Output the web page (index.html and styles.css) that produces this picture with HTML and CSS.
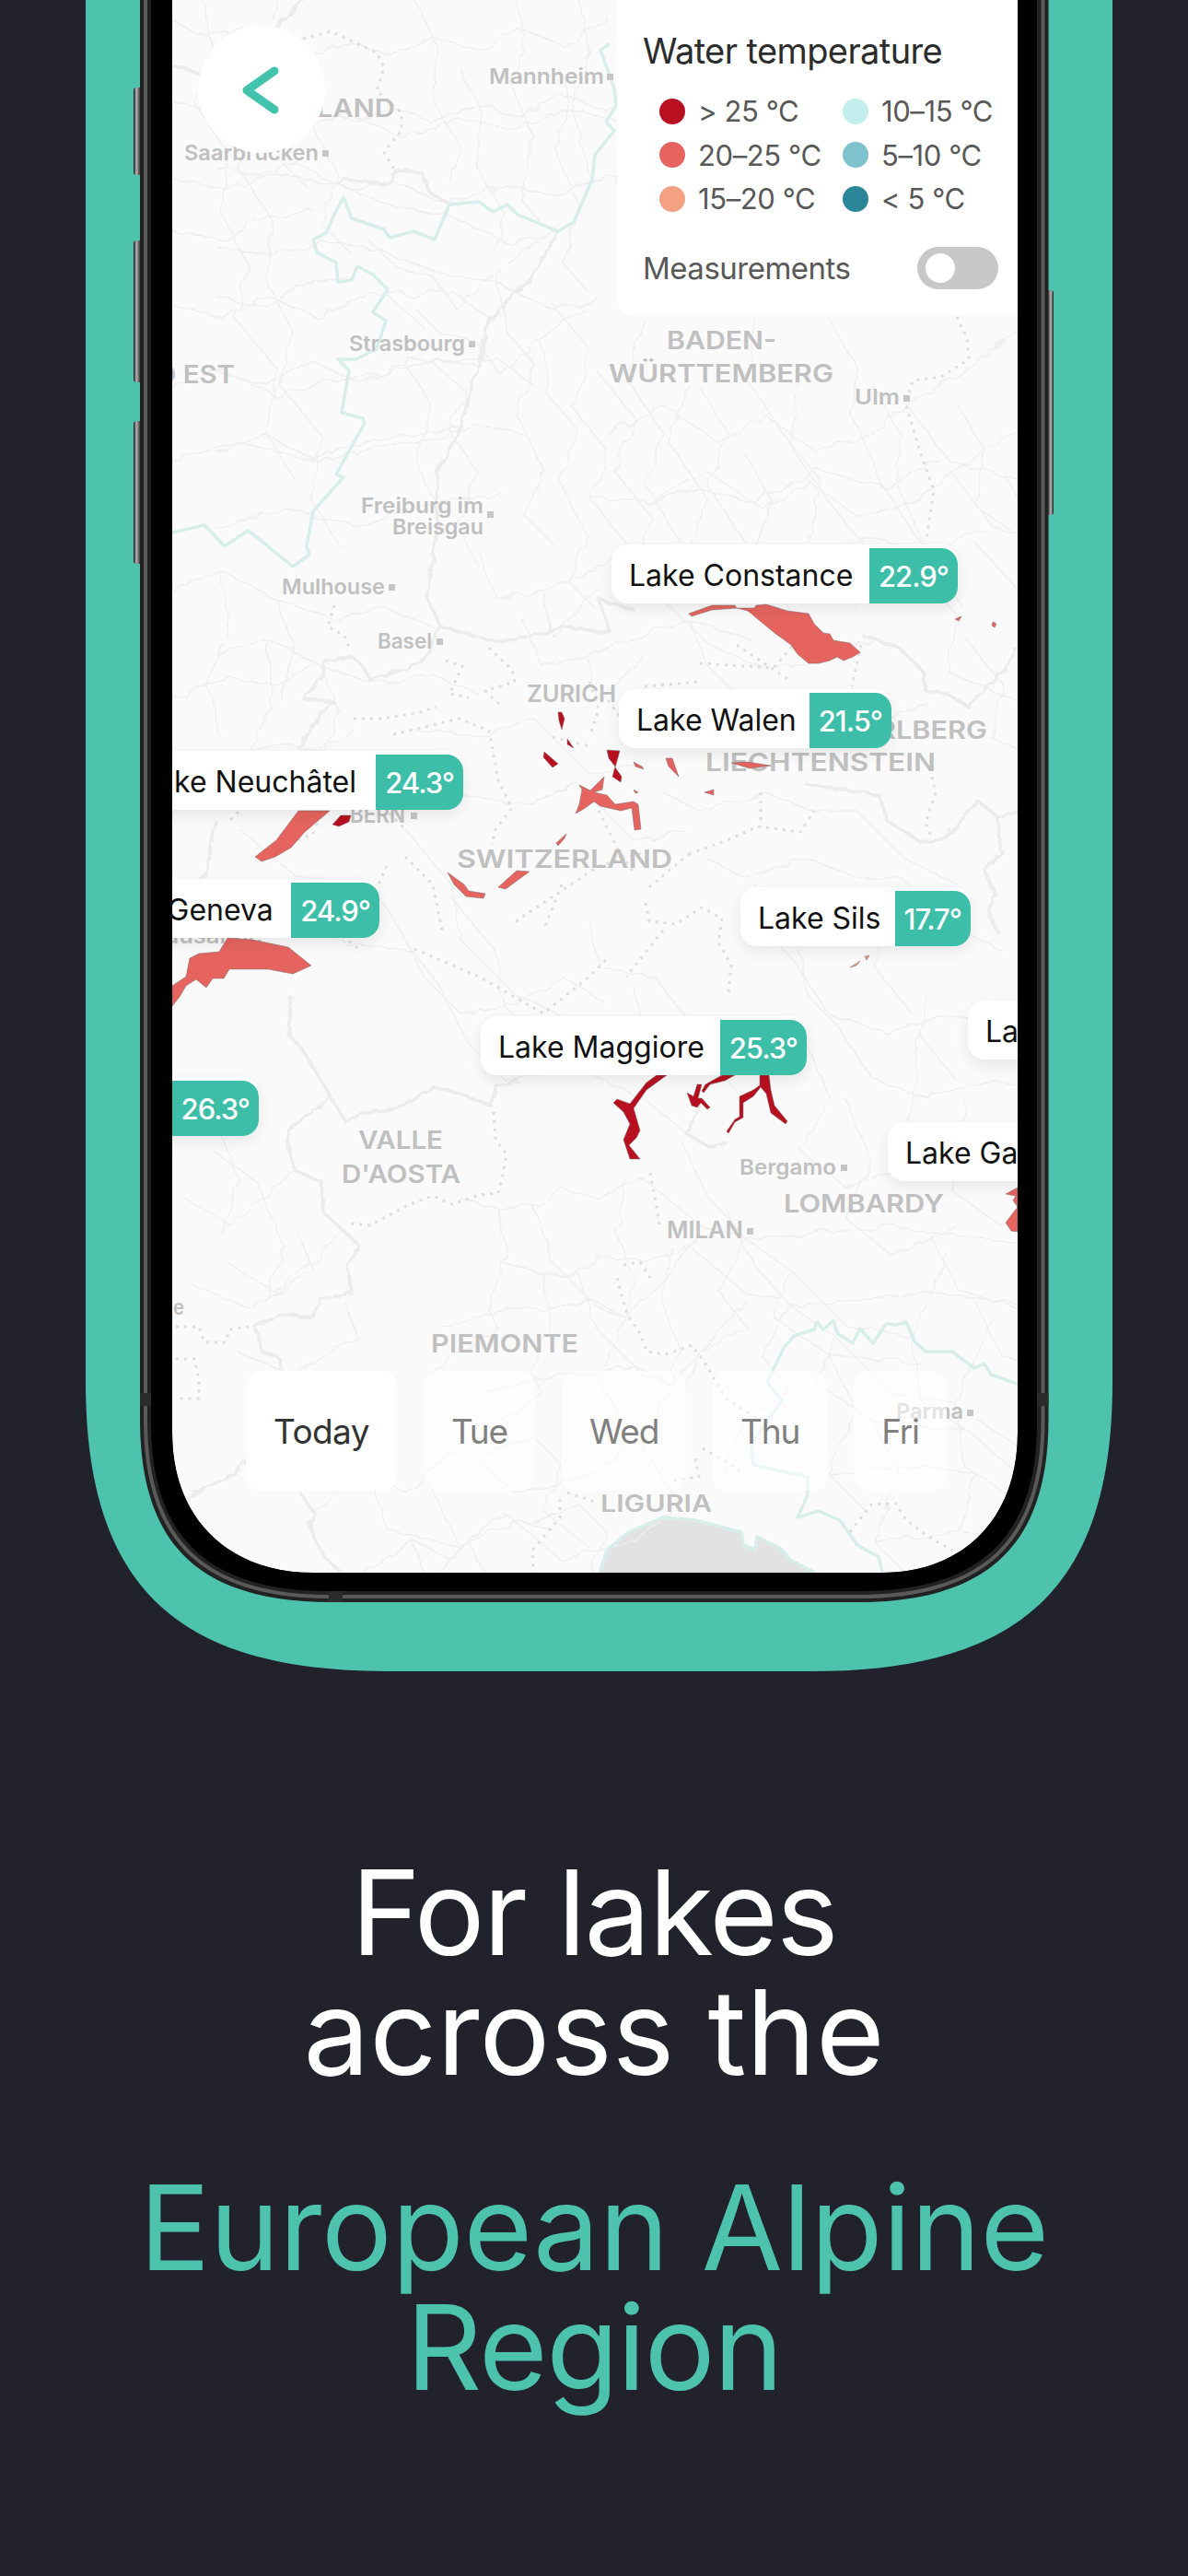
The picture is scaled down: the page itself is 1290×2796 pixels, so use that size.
FILE: index.html
```html
<!DOCTYPE html>
<html lang="en">
<head>
<meta charset="utf-8">
<title>Lake temperatures</title>
<link rel="stylesheet" href="styles.css">
</head>
<body>
<section class="stage">
  <svg class="panel" viewBox="0 0 1290 1814" aria-hidden="true"><path d="M93,0 V1500 C93,1725 195,1814 420,1814 H880 C1106,1814 1208,1725 1208,1500 V0 Z"/></svg>
  <div class="screen">
    <svg class="map" viewBox="187 0 918 1707">
      <defs>
        <filter id="wobble" filterUnits="userSpaceOnUse" x="187" y="0" width="918" height="1707"><feTurbulence type="fractalNoise" baseFrequency=".05" numOctaves="2" seed="4"/><feDisplacementMap in="SourceGraphic" scale="12"/></filter>
        <filter id="wobble-soft" filterUnits="userSpaceOnUse" x="187" y="0" width="918" height="1707"><feTurbulence type="fractalNoise" baseFrequency=".09" numOctaves="2" seed="9"/><feDisplacementMap in="SourceGraphic" scale="7"/></filter>
      </defs>
      <path class="sea" d="M651,1707 L659,1683 L682,1663 L720,1647 L755,1650 L805,1663 L807,1677 L820,1682 L822,1668 L847,1680 L858,1693 L885,1707 Z"/>
      <g class="roads-wrap">
      <g id="roads" class="roads">
        <path d="M187,22 L225,40 L262,30 L300,52 L345,60 L380,45 L420,60 L470,42 L520,55 L560,30 L610,48 L660,20 M187,110 L235,120 L275,105 L330,135 L380,125 L440,150 L500,128 L560,140 L610,118 L668,130 M187,195 L240,205 L300,190 L365,200 L430,225 L490,235 L555,265 L606,252 M220,0 L232,55 L210,110 L250,170 L240,230 L270,290 L255,345 L300,400 L290,470 L320,520 M300,0 L290,60 L320,120 L300,170 L335,205 M450,0 L475,50 L470,110 L500,160 L490,200 M560,0 L570,40 L555,90 L580,150 L565,215 L590,245 M630,0 L640,60 L622,120 L640,190"/>
        <path d="M187,250 L245,262 L275,238 L340,228 M187,330 L240,345 L290,320 L345,345 L400,318 L450,320 L490,315 L530,345 M187,420 L240,400 L300,430 L355,415 L420,405 L470,390 L520,398 M187,500 L260,480 L340,500 L395,480 L450,470 L500,463 M400,260 L430,290 L470,300 L495,335 L540,295 L585,262 M420,320 L460,355 L440,395 L470,440 L450,500 L470,540 M540,300 L550,360 L580,395 L560,450 L590,510 L570,560 L600,590 M600,330 L640,380 L620,440 L660,490 L640,540 L680,590 M700,345 L680,410 L720,470 L700,525 L740,590 M760,420 L790,470 L770,530 L810,590 M820,345 L810,410 L850,470 L890,520 L880,590 M660,470 L720,440 L780,480 L830,450 L885,490 L950,470 L985,440 M640,540 L700,545 L760,530 L820,545 L890,510 L960,530 L1020,500 M900,345 L930,400 L925,450 L960,530 L1000,590 M1105,360 L1050,400 L985,440 L1030,500 L1105,520 M1040,440 L1070,490 L1060,550 L1105,580"/>
        <path d="M187,640 L240,620 L300,650 L360,670 L420,660 L470,680 M240,620 L250,680 L225,740 L240,800 M300,650 L320,700 L305,760 M187,760 L250,735 L300,745 L340,720 M520,600 L540,650 L590,640 L640,620 L700,600 L770,625 M590,640 L600,690 L650,640 M700,600 L720,650 L770,700 L830,725 L890,720 L960,690 M1000,620 L1040,670 L1030,730 L1105,760 M1060,590 L1105,640 M450,790 L520,800 L580,780 L640,840 L700,830 M440,900 L490,960 L500,1020 L560,1080 L650,1120 L700,1160 M260,900 L320,950 L400,960 L430,1000 L460,1060 L500,1100 L560,1090 L610,1060 L660,1090 M720,860 L760,880 L830,860 L880,880 L930,880 L980,930 L1040,960 M820,960 L830,1010 L860,1040 L900,1100 L960,1120 L1030,1100 L1105,1120 M640,1000 L650,1050 L710,1060 L750,1110 M960,1010 L950,1050 L990,1100 M187,1180 L230,1210 L260,1280 L240,1340 M200,1300 L250,1330 L300,1290 L320,1270 M210,1395 L270,1420 L340,1380 L325,1340"/>
        <path d="M500,1300 L540,1310 L580,1310 L610,1290 L650,1300 L700,1280 L760,1330 L800,1340 M540,1310 L550,1360 L530,1420 L540,1440 L500,1470 L470,1490 M580,1310 L600,1370 L650,1420 L680,1430 L720,1390 L760,1340 M680,1430 L640,1410 L600,1420 L555,1420 L480,1440 M680,1280 L670,1340 L690,1390 L680,1430 L650,1500 L690,1560 L640,1600 M740,1240 L770,1300 L810,1345 L860,1380 L920,1440 L990,1450 L1030,1360 M810,1345 L780,1400 L810,1440 L760,1470 L735,1530 M810,1345 L870,1340 L960,1330 L1030,1340 L1105,1350 M860,1380 L840,1430 L900,1470 L1000,1480 M1000,1120 L985,1220 L1040,1260 L1105,1240 M870,1120 L900,1190 L870,1250 L920,1290 L990,1260 M1010,1340 L1040,1400 L1105,1420 M990,1450 L1000,1520 L1060,1560 L1105,1600 M900,1470 L930,1530 L900,1600 L940,1640 M1060,1540 L1105,1570 M640,1600 L560,1620 L500,1570 L460,1600 L500,1680 L480,1707 M530,1580 L580,1560 L610,1590 L590,1640 L640,1680 M500,1680 L560,1650 L600,1660 M900,1600 L1000,1590 L1060,1600 L1040,1660 M340,1640 L400,1600 L440,1620 L500,1570 M400,1600 L420,1660 L500,1680"/>
      </g>
      <use href="#roads" transform="translate(48,72)"/>
      </g>
      <g class="borders">
        <path d="M363,199 L375,193 L421,201 L432,184 L459,188 L467,209 L488,222 M187,70 L230,85 L262,60 L300,30 L330,0 M606,252 L574,306 L558,318 L528,352 L520,398 L509,429 L501,463 L474,513 L474,536 L475,580 L463,647 L477,677 L463,713 L441,727 L402,737 L391,720 L381,712 L352,717 L349,737 L327,757 L363,763 L345,780 L324,813 M234,890 L224,950 L190,980"/>
        <path d="M477,680 L541,697 L591,687 L609,680 L663,687 L650,650 L691,663 M937,690 L976,703 L994,720 L1003,730 L1005,750 L1028,753 L1051,767 L1087,730 L1105,705 M873,850 L955,863 L962,890 L1001,915 L1026,910 L1062,870 L1084,887 L1105,880 M1084,887 L1087,927 L1069,943 L1080,970 L1073,990 L1084,1013 M316,1080 L313,1123 L327,1137 L359,1190 L374,1217 L399,1207 L431,1203 L470,1180 L499,1187 L534,1200 L538,1180 L563,1173 M359,1190 L313,1227 L313,1247 L320,1270 L349,1283 L352,1317 L370,1333 L391,1353 L377,1373 L381,1403 L349,1410 L338,1430 L302,1427 L277,1440 L284,1467 L302,1473 L306,1487 M325,1620 L342,1643 L335,1655 L352,1690 L371,1707 M202,1627 L218,1617 L256,1600 L268,1583 M760,1200 L745,1230 L770,1245 L790,1240"/>
      </g>
      <g class="cantons">
        <path d="M329,42 L359,34 L409,57 L417,73 L409,99 L436,122 L436,142 L417,165 L428,184 M1039,344 L1050,367 L1052,390 L1022,409 L991,413 L984,440 L999,490 L1014,532 L1006,585 M363,657 L356,680 L374,690 L381,707 M484,717 L502,723 L488,753 L509,757 M531,703 L556,727 L559,740 L527,750 L545,767 M384,780 L416,780 L456,773 L474,767 M427,797 L499,780 L531,793 L541,847 L556,877 L538,900 L534,917 M748,927 L787,913 L823,897 L869,903 L884,880 M826,860 L826,897 M705,963 L748,927 M701,980 L705,1000 L734,1003 L762,985 L784,997 L780,1023 L794,1047 L791,1077 M1012,843 L1016,860 L1005,893 L1012,910 M536,1207 L538,1237 L550,1253 L545,1280 L541,1295 L520,1297 L491,1307 L470,1298 L445,1307 L402,1330 L381,1328 M706,1273 L713,1310 L716,1330 M677,1373 L695,1370 L706,1387 M670,1387 L677,1413 L681,1427 L695,1447 L702,1467 L723,1470 L751,1460 L766,1480 L787,1517 L823,1540 M191,1440 L216,1440 L222,1457 L245,1457 L249,1443 L270,1440 M191,1475 L211,1475 L216,1497 L216,1518 L191,1518 M763,1572 L789,1587 L808,1600 M755,1583 L759,1603 L732,1607 M923,1663 L946,1633 L973,1632 L984,1650 L1007,1667 L1034,1683 M608,1627 L608,1647 L578,1683 L579,1707 M616,1620 L646,1630"/>
        <path d="M330,850 L280,860 L250,890 M290,925 L340,905 L350,880 M330,960 L350,1000 L390,1030 M410,870 L440,900 M420,940 L400,985 M440,930 L470,960 L480,1010 M450,1030 L520,1060 L590,1100 L640,1060 L660,1040 M560,1000 L620,960 L650,940 L700,925 M610,960 L590,1010 M660,760 L690,800 M640,740 L650,770 L640,800 M600,800 L640,810 M650,880 L670,920 L690,950 M720,1010 L680,1060 M800,700 L860,740 M760,720 L840,725 L870,690 M700,745 L760,740 M935,700 L925,745"/>
      </g>
      <g class="frontier">
        <path d="M662,48 L652,54 L667,96 L669,115 L658,132 L667,142 L646,168 L643,195 L623,241 L606,251 L562,233 L551,222 L535,230 L520,219 L488,222 L472,260 L449,251 L423,258 L417,249 L382,237 L373,214 L363,233 L354,253 L340,260 L344,274 L365,285 L367,306 L382,304 L388,289 L405,298 L421,314 L405,339 L419,348 L409,379 L386,390 L367,390 L379,402 L371,448 L394,454 L396,459 L365,515 L373,518 L340,555 L333,593 L336,602 L318,615 L275,580 L269,576 L244,593 L222,570 L187,578"/>
        <path d="M1105,1502 L1076,1492 L1069,1480 L1058,1485 L1034,1467 L1005,1467 L994,1457 L984,1435 L973,1438 L962,1437 L948,1458 L934,1442 L926,1458 L909,1447 L905,1433 L894,1443 L887,1435 L884,1443 L862,1450 L851,1463 L833,1500 L849,1520 L816,1567 L818,1590 L877,1603 L877,1623 L866,1647 L889,1640 L912,1650 L931,1677 L954,1690 L958,1707"/>
        <path d="M651,1707 L659,1683 L682,1663 L720,1647 L755,1650 L805,1663 L807,1677 L820,1682 L822,1668 L847,1680 L858,1693 L885,1707"/>
      </g>
      <g class="markers">
        <rect x="659" y="80" width="7" height="7"/><rect x="350" y="163" width="7" height="7"/><rect x="509" y="370" width="7" height="7"/><rect x="529" y="555" width="7" height="7"/><rect x="981" y="429" width="7" height="7"/><rect x="422" y="634" width="7" height="7"/><rect x="474" y="693" width="7" height="7"/><rect x="446" y="882" width="7" height="7"/><rect x="913" y="1264" width="7" height="7"/><rect x="811" y="1333" width="7" height="7"/><rect x="1050" y="1530" width="7" height="7"/>
      </g>
      <g class="labels">
        <text class="city" x="531" y="91" textLength="125" lengthAdjust="spacingAndGlyphs">Mannheim</text>
        <text class="city" x="200" y="174" textLength="146" lengthAdjust="spacingAndGlyphs">Saarbrücken</text>
        <text class="city" x="379" y="381" textLength="126" lengthAdjust="spacingAndGlyphs">Strasbourg</text>
        <text class="city" x="392" y="557" textLength="133" lengthAdjust="spacingAndGlyphs">Freiburg im</text>
        <text class="city" x="426" y="580" textLength="99" lengthAdjust="spacingAndGlyphs">Breisgau</text>
        <text class="city" x="928" y="439" textLength="49" lengthAdjust="spacingAndGlyphs">Ulm</text>
        <text class="city" x="306" y="645" textLength="112" lengthAdjust="spacingAndGlyphs">Mulhouse</text>
        <text class="city" x="410" y="704" textLength="59" lengthAdjust="spacingAndGlyphs">Basel</text>
        <text class="city" x="803" y="1275" textLength="105" lengthAdjust="spacingAndGlyphs">Bergamo</text>
        <text class="city" x="973" y="1540" textLength="73" lengthAdjust="spacingAndGlyphs">Parma</text>
        <text class="city" x="165" y="1024" textLength="120" lengthAdjust="spacingAndGlyphs">Lausanne</text>
        <text class="city" x="188" y="1427" textLength="12" lengthAdjust="spacingAndGlyphs">e</text>
        <text class="region" x="259" y="127" textLength="170" lengthAdjust="spacingAndGlyphs">SAARLAND</text>
        <text class="region" x="85" y="416" textLength="170" lengthAdjust="spacingAndGlyphs">GRAND EST</text>
        <text class="region" x="724" y="379" textLength="119" lengthAdjust="spacingAndGlyphs">BADEN-</text>
        <text class="region" x="661" y="415" textLength="244" lengthAdjust="spacingAndGlyphs">WÜRTTEMBERG</text>
        <text class="region small" x="572" y="762" textLength="97" lengthAdjust="spacingAndGlyphs">ZURICH</text>
        <text class="region small" x="380" y="893" textLength="60" lengthAdjust="spacingAndGlyphs">BERN</text>
        <text class="region" x="496" y="942" textLength="234" lengthAdjust="spacingAndGlyphs">SWITZERLAND</text>
        <text class="region" x="866" y="802" textLength="206" lengthAdjust="spacingAndGlyphs">VORARLBERG</text>
        <text class="region" x="766" y="837" textLength="250" lengthAdjust="spacingAndGlyphs">LIECHTENSTEIN</text>
        <text class="region" x="389" y="1247" textLength="92" lengthAdjust="spacingAndGlyphs">VALLE</text>
        <text class="region" x="371" y="1284" textLength="129" lengthAdjust="spacingAndGlyphs">D'AOSTA</text>
        <text class="region" x="468" y="1468" textLength="160" lengthAdjust="spacingAndGlyphs">PIEMONTE</text>
        <text class="region" x="851" y="1316" textLength="174" lengthAdjust="spacingAndGlyphs">LOMBARDY</text>
        <text class="region small" x="724" y="1344" textLength="83" lengthAdjust="spacingAndGlyphs">MILAN</text>
        <text class="region small" x="652" y="1641" textLength="121" lengthAdjust="spacingAndGlyphs">LIGURIA</text>
      </g>
      <g class="lake warm">
        <path d="M247,1018 L274,1020 L313,1028 L338,1048 L318,1057 L291,1052 L249,1052 L243,1062 L231,1062 L224,1072 L213,1063 L202,1070 L195,1082 L187,1092 L187,1070 L202,1060 L206,1040 L216,1035 L238,1033 Z"/>
        <path d="M324,880 L358,880 L331,903 L316,920 L299,930 L284,935 L277,930 L300,912 Z"/>
        <path d="M486,947 L504,960 L509,967 L527,970 L525,975 L506,973 L493,960 Z"/>
        <path d="M541,963 L561,945 L575,946 L549,965 Z"/>
        <path d="M656,843 L654,857 L645,860 L659,863 L668,873 L688,870 L693,873 L696,900 L689,901 L686,877 L674,880 L652,875 L645,870 L634,878 L625,883 L629,873 L632,857 L629,852 L641,858 Z"/>
        <path d="M604,915 L615,905 L613,910 L606,918 Z"/>
        <path d="M688,827 L697,832 L699,835 L690,832 Z"/><path d="M688,857 L693,860 L690,861 Z"/>
        <path d="M723,823 L730,823 L737,843 L726,832 Z"/><path d="M794,828 L812,827 L837,831 L814,834 Z"/><path d="M765,860 L775,857 L775,863 Z"/>
        <path d="M748,666 L773,657 L798,657 L800,660 L819,660 L821,657 L832,656 L855,663 L878,666 L884,677 L894,687 L901,688 L905,695 L923,698 L934,708 L926,713 L916,717 L909,713 L901,717 L889,720 L878,720 L866,710 L859,700 L841,687 L812,663 L800,660 L773,662 L751,669 Z"/>
        <path d="M1037,672 L1044,669 L1041,674 Z"/><path d="M1078,675 L1082,677 L1080,681 L1077,679 Z"/>
        <path d="M1105,1289 L1092,1296 L1103,1298 L1100,1303 L1105,1310 L1092,1327 L1098,1336 L1105,1337 Z"/>
      </g>
      <g class="lake hot">
        <path d="M361,895 L370,885 L381,885 L379,892 L368,897 Z"/>
        <path d="M606,773 L610,773 L613,780 L610,792 L607,782 Z"/><path d="M616,802 L623,812 L616,808 Z"/><path d="M591,816 L606,829 L600,833 L590,822 Z"/>
        <path d="M659,814 L673,815 L668,833 L675,843 L674,849 L665,843 L668,832 L661,823 Z"/>
        <path d="M713,1167 L724,1167 L702,1183 L688,1203 L695,1227 L691,1235 L683,1243 L695,1258 L684,1258 L677,1237 L684,1220 L677,1207 L666,1197 L670,1193 L684,1198 L702,1175 Z"/>
        <path d="M746,1186 L753,1190 L757,1177 L762,1177 L758,1192 L762,1192 L771,1202 L768,1204 L761,1197 L757,1202 L751,1200 Z"/>
        <path d="M766,1177 L784,1167 L798,1167 L787,1173 L771,1177 L764,1186 L762,1184 Z"/>
        <path d="M825,1167 L835,1167 L837,1183 L841,1200 L855,1217 L853,1220 L837,1208 L832,1187 L826,1180 L818,1190 L807,1197 L807,1213 L798,1218 L791,1230 L789,1228 L798,1215 L803,1212 L803,1190 L818,1183 L825,1178 Z"/>
      </g>
      <g class="lake mild">
        <path d="M923,1050 L934,1043 L930,1048 Z"/><path d="M939,1038 L944,1037 L941,1042 Z"/>
      </g>
    </svg>

    <button class="back" type="button" aria-label="Back">
      <svg class="back-icon" viewBox="0 0 138 138"><polyline points="83,49 53,70 83,91"/></svg>
    </button>

    <aside class="legend">
      <h2 class="legend-title">Water temperature</h2>
      <ul class="legend-grid">
        <li class="legend-item"><span class="dot d1"></span>&gt; 25 °C</li>
        <li class="legend-item"><span class="dot d4"></span>10–15 °C</li>
        <li class="legend-item"><span class="dot d2"></span>20–25 °C</li>
        <li class="legend-item"><span class="dot d5"></span>5–10 °C</li>
        <li class="legend-item"><span class="dot d3"></span>15–20 °C</li>
        <li class="legend-item"><span class="dot d6"></span>&lt; 5 °C</li>
      </ul>
      <div class="legend-toggle">
        <span>Measurements</span>
        <span class="switch"><span class="knob"></span></span>
      </div>
    </aside>

    <div class="pin p-constance"><span class="pin-name">Lake Constance</span><span class="pin-temp">22.9°</span></div>
    <div class="pin p-walen"><span class="pin-name">Lake Walen</span><span class="pin-temp">21.5°</span></div>
    <div class="pin p-neuchatel"><span class="pin-name">Lake Neuchâtel</span><span class="pin-temp">24.3°</span></div>
    <div class="pin p-geneva"><span class="pin-name">Lake Geneva</span><span class="pin-temp">24.9°</span></div>
    <div class="pin p-sils"><span class="pin-name">Lake Sils</span><span class="pin-temp">17.7°</span></div>
    <div class="pin p-annecy"><span class="pin-temp">26.3°</span></div>
    <div class="pin p-maggiore"><span class="pin-name">Lake Maggiore</span><span class="pin-temp">25.3°</span></div>
    <div class="pin p-la"><span class="pin-name">Lake Iseo</span></div>
    <div class="pin p-garda"><span class="pin-name">Lake Garda</span></div>

    <nav class="tabs">
      <span class="tab active">Today</span>
      <span class="tab">Tue</span>
      <span class="tab">Wed</span>
      <span class="tab">Thu</span>
      <span class="tab">Fri</span>
    </nav>
  </div>

  <svg class="device" viewBox="0 0 1290 1814" aria-hidden="true">
    <defs>
      <linearGradient id="btnL" x1="0" x2="1" y1="0" y2="0"><stop offset="0" stop-color="#111"/><stop offset=".35" stop-color="#b5b5b5"/><stop offset=".75" stop-color="#444"/><stop offset="1" stop-color="#222"/></linearGradient>
      <linearGradient id="btnR" x1="1" x2="0" y1="0" y2="0"><stop offset="0" stop-color="#111"/><stop offset=".35" stop-color="#b5b5b5"/><stop offset=".75" stop-color="#444"/><stop offset="1" stop-color="#222"/></linearGradient>
    </defs>
    <g fill="url(#btnL)">
      <rect x="145" y="95" width="9" height="95" rx="3"/><rect x="145" y="261" width="9" height="154" rx="3"/><rect x="145" y="457" width="9" height="155" rx="3"/>
    </g>
    <rect x="1136" y="315" width="8" height="244" rx="3" fill="url(#btnR)"/>
    <path class="body" fill-rule="evenodd" d="M152,0 V1540 C152,1680 220,1739 360,1739 H930 C1070,1739 1138.5,1680 1138.5,1540 V0 Z M187,0 V1555 C187,1650 250,1707 340,1707 H958 C1044,1707 1105,1650 1105,1555 V0 Z"/>
    <path class="edge" d="M158,0 V1542 C158,1675 224,1733 358,1733 H932 C1066,1733 1132.5,1675 1132.5,1542 V0"/>
    <path class="band" d="M152,1512 h12 v14 h-12 Z M1126,1512 h12.5 v14 h-12.5 Z M357,1727 h15 v12 h-15 Z"/>
    <path class="bezel" fill-rule="evenodd" d="M164,0 V1545 C164,1670 228,1727 355,1727 H935 C1062,1727 1126,1670 1126,1545 V0 Z M187,0 V1555 C187,1650 250,1707 340,1707 H958 C1044,1707 1105,1650 1105,1555 V0 Z"/>
  </svg>
</section>

<section class="copy">
  <p class="line-white"><span class="l1">For lakes</span><span class="l2">across the</span></p>
  <p class="line-teal"><span class="l3">European Alpine</span><span class="l4">Region</span></p>
</section>
</body>
</html>
```

FILE: styles.css
```css
* { box-sizing: border-box; }
html, body { margin: 0; padding: 0; }
body {
  width: 1290px;
  height: 2796px;
  overflow: hidden;
  background: #21222b;
  font-family: "Inter", "Liberation Sans", sans-serif;
}

.stage { position: relative; height: 1814px; }
.panel { position: absolute; inset: 0; width: 1290px; height: 1814px; fill: #4dc3ae; }
.device { position: absolute; inset: 0; width: 1290px; height: 1814px; pointer-events: none; }
.body { fill: #222; }
.edge { fill: none; stroke: #5a5a5a; stroke-width: 4; }
.band { fill: #2b2b2b; }
.bezel { fill: #000; }

.screen {
  position: relative;
  margin-left: 187px;
  width: 918px;
  height: 1707px;
  overflow: hidden;
  border-radius: 0 0 125px 125px;
  background: #fafafa;
}
.map { display: block; width: 918px; height: 1707px; }
.sea { fill: #e2e2e2; }
.roads-wrap { filter: url(#wobble); }
.roads path { fill: none; stroke: #efefef; stroke-width: 1.4; stroke-linejoin: round; }
.borders { filter: url(#wobble-soft); }
.borders path { fill: none; stroke: #ececec; stroke-width: 3.5; stroke-linejoin: round; }
.cantons path { fill: none; stroke: #dedede; stroke-width: 3; stroke-dasharray: 3 6; stroke-linejoin: round; }
.frontier path { fill: none; stroke: #d8eeea; stroke-width: 3.5; stroke-linejoin: round; }
.markers rect { fill: #c6c6c6; }
.labels text { fill: #c0c0c0; font-family: "Inter", sans-serif; font-weight: 600; }
.city { font-size: 23px; }
.region { font-size: 27.5px; }
.region.small { font-size: 25px; }
.lake path { stroke: #7a6a6a; stroke-width: .5; }
.warm path { fill: #e5645f; }
.hot path { fill: #b81020; }
.mild path { fill: #f0a080; }

.back {
  position: absolute;
  left: 28px;
  top: 28px;
  width: 138px;
  height: 138px;
  padding: 0;
  border: 0;
  border-radius: 50%;
  background: #fff;
}
.back-icon { display: block; width: 138px; height: 138px; fill: none; stroke: #42c3ad; stroke-width: 9; stroke-linecap: round; stroke-linejoin: round; }

.legend {
  position: absolute;
  top: 0;
  right: 0;
  width: 435px;
  height: 342px;
  padding: 33px 21px 0 28px;
  background: #fff;
  border-bottom-left-radius: 16px;
}
.legend-title { margin: 0; font-size: 38px; line-height: 44px; font-weight: 400; color: #2c2c2c; letter-spacing: -.6px; white-space: nowrap; }
.legend-grid {
  list-style: none;
  margin: 20px 0 0;
  padding: 0 0 0 18px;
  display: grid;
  grid-template-columns: 199px 1fr;
  grid-auto-rows: 47.5px;
}
.legend-item { display: flex; align-items: center; gap: 14px; font-size: 31px; color: #585858; letter-spacing: -.4px; white-space: nowrap; }
.dot { flex: none; width: 28px; height: 28px; border-radius: 50%; }
.d1 { background: #b81020; }
.d2 { background: #e5645f; }
.d3 { background: #f4a083; }
.d4 { background: #c2efed; }
.d5 { background: #7ec2ce; }
.d6 { background: #2b8699; }
.legend-toggle { display: flex; align-items: center; justify-content: space-between; height: 46px; margin-top: 28px; font-size: 33px; color: #585858; letter-spacing: -.5px; }
.switch { display: flex; align-items: center; width: 88px; height: 46px; padding-left: 9px; border-radius: 23px; background: #c8c8c8; }
.knob { width: 32px; height: 32px; border-radius: 50%; background: #fff; }

.pin {
  position: absolute;
  display: flex;
  align-items: flex-end;
  height: 64px;
  border-radius: 18px;
  background: #fff;
  box-shadow: 0 6px 16px rgba(0, 0, 0, .08);
  white-space: nowrap;
}
.pin-name { flex: 1; align-self: center; padding: 2px 0 0 19px; font-size: 32px; color: #111; }
.pin-temp {
  flex: none;
  height: 60px;
  padding: 0 10px;
  display: flex;
  align-items: center;
  border-radius: 0 18px 18px 0;
  background: #3cbea8;
  font-size: 31px;
  font-weight: 500;
  color: #fff;
  letter-spacing: -1px;
}
.p-constance { left: 477px; top: 591px; width: 376px; }
.p-walen { left: 485px; top: 748px; width: 296px; }
.p-neuchatel { left: -53px; top: 815px; width: 369px; }
.p-geneva { left: -105px; top: 954px; width: 330px; }
.p-sils { left: 617px; top: 963px; width: 250px; }
.p-annecy { left: -60px; top: 1169px; width: 154px; justify-content: flex-end; }
.p-maggiore { left: 335px; top: 1103px; width: 354px; }
.p-la { left: 864px; top: 1086px; width: 200px; }
.p-garda { left: 777px; top: 1218px; width: 300px; }

.tabs {
  position: absolute;
  left: 80px;
  top: 1488px;
  display: flex;
  gap: 29px;
}
.tab {
  display: flex;
  align-items: center;
  height: 130px;
  padding: 0 30px;
  border-radius: 16px;
  background: rgba(255, 255, 255, .55);
  font-size: 37px;
  color: #808080;
  letter-spacing: -1.2px;
}
.tab.active { background: #fff; color: #333; letter-spacing: -.6px; }

.copy { padding-top: 197px; text-align: center; font-size: 128px; line-height: 130px; font-weight: 400; }
.copy p { margin: 0; }
.copy span { display: block; }
.l1 { letter-spacing: -1.8px; }
.l2 { letter-spacing: 0; }
.l3 { letter-spacing: -.3px; }
.l4 { letter-spacing: -1.5px; }
.copy .line-white { color: #fff; }
.copy .line-teal { margin-top: 82px; color: #4dc3ae; }
```
